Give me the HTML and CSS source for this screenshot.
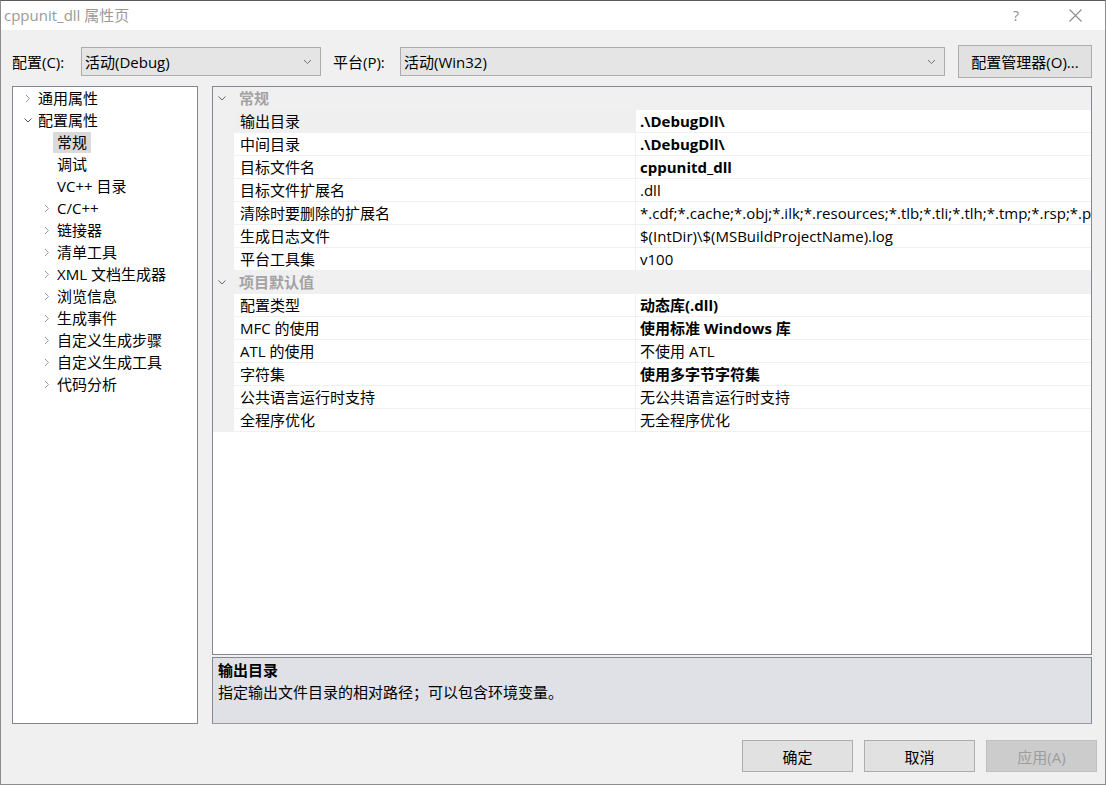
FILE: index.html
```html
<!DOCTYPE html>
<html lang="zh-CN">
<head>
<meta charset="utf-8">
<title>cppunit_dll 属性页</title>
<link rel="stylesheet" href="styles.css">
</head>
<body>
<div class="window">
  <div class="titlebar">
    <span class="title">cppunit_dll 属性页</span>
    <span class="tb-help">?</span>
    <span class="tb-close"><svg width="13" height="13" viewBox="0 0 13 13"><path d="M0.5 0.5 L12.5 12.5 M12.5 0.5 L0.5 12.5" stroke="#8c8c8c" stroke-width="1.1" fill="none"/></svg></span>
  </div>

  <div class="toolbar">
    <span class="lbl lbl1">配置(C):</span>
    <div class="combo combo1"><span>活动(Debug)</span><svg class="cchev" width="9" height="6" viewBox="0 0 9 6"><polyline points="1,1 4.5,4.5 8,1" fill="none" stroke="#707070" stroke-width="1"/></svg></div>
    <span class="lbl lbl2">平台(P):</span>
    <div class="combo combo2"><span>活动(Win32)</span><svg class="cchev" width="9" height="6" viewBox="0 0 9 6"><polyline points="1,1 4.5,4.5 8,1" fill="none" stroke="#707070" stroke-width="1"/></svg></div>
    <button class="btn mgr">配置管理器(O)...</button>
  </div>

  <div class="main">
    <div class="tree">
      <div class="ti l1"><svg class="chev" width="8" height="9" viewBox="0 0 8 9"><polyline points="2,1 5.5,4.5 2,8" fill="none" stroke="#9a9a9a" stroke-width="1"/></svg><span>通用属性</span></div>
      <div class="ti l1"><svg class="chev" width="8" height="9" viewBox="0 0 8 9"><polyline points="0.5,2.5 4,6 7.5,2.5" fill="none" stroke="#555" stroke-width="1"/></svg><span>配置属性</span></div>
      <div class="ti l2 noc"><span class="sel">常规</span></div>
      <div class="ti l2 noc"><span>调试</span></div>
      <div class="ti l2 noc"><span>VC++ 目录</span></div>
      <div class="ti l2"><svg class="chev" width="8" height="9" viewBox="0 0 8 9"><polyline points="2,1 5.5,4.5 2,8" fill="none" stroke="#9a9a9a" stroke-width="1"/></svg><span>C/C++</span></div>
      <div class="ti l2"><svg class="chev" width="8" height="9" viewBox="0 0 8 9"><polyline points="2,1 5.5,4.5 2,8" fill="none" stroke="#9a9a9a" stroke-width="1"/></svg><span>链接器</span></div>
      <div class="ti l2"><svg class="chev" width="8" height="9" viewBox="0 0 8 9"><polyline points="2,1 5.5,4.5 2,8" fill="none" stroke="#9a9a9a" stroke-width="1"/></svg><span>清单工具</span></div>
      <div class="ti l2"><svg class="chev" width="8" height="9" viewBox="0 0 8 9"><polyline points="2,1 5.5,4.5 2,8" fill="none" stroke="#9a9a9a" stroke-width="1"/></svg><span>XML 文档生成器</span></div>
      <div class="ti l2"><svg class="chev" width="8" height="9" viewBox="0 0 8 9"><polyline points="2,1 5.5,4.5 2,8" fill="none" stroke="#9a9a9a" stroke-width="1"/></svg><span>浏览信息</span></div>
      <div class="ti l2"><svg class="chev" width="8" height="9" viewBox="0 0 8 9"><polyline points="2,1 5.5,4.5 2,8" fill="none" stroke="#9a9a9a" stroke-width="1"/></svg><span>生成事件</span></div>
      <div class="ti l2"><svg class="chev" width="8" height="9" viewBox="0 0 8 9"><polyline points="2,1 5.5,4.5 2,8" fill="none" stroke="#9a9a9a" stroke-width="1"/></svg><span>自定义生成步骤</span></div>
      <div class="ti l2"><svg class="chev" width="8" height="9" viewBox="0 0 8 9"><polyline points="2,1 5.5,4.5 2,8" fill="none" stroke="#9a9a9a" stroke-width="1"/></svg><span>自定义生成工具</span></div>
      <div class="ti l2"><svg class="chev" width="8" height="9" viewBox="0 0 8 9"><polyline points="2,1 5.5,4.5 2,8" fill="none" stroke="#9a9a9a" stroke-width="1"/></svg><span>代码分析</span></div>
    </div>

    <div class="right">
      <div class="grid">
        <div class="cat"><span class="margin"><svg width="8" height="9" viewBox="0 0 8 9"><polyline points="0.5,2.5 4,6 7.5,2.5" fill="none" stroke="#666" stroke-width="1"/></svg></span><span class="cat-name">常规</span></div>
        <div class="row selrow"><span class="margin"></span><span class="name">输出目录</span><span class="val b">.\DebugDll\</span></div>
        <div class="row"><span class="margin"></span><span class="name">中间目录</span><span class="val b">.\DebugDll\</span></div>
        <div class="row"><span class="margin"></span><span class="name">目标文件名</span><span class="val b">cppunitd_dll</span></div>
        <div class="row"><span class="margin"></span><span class="name">目标文件扩展名</span><span class="val">.dll</span></div>
        <div class="row"><span class="margin"></span><span class="name">清除时要删除的扩展名</span><span class="val">*.cdf;*.cache;*.obj;*.ilk;*.resources;*.tlb;*.tli;*.tlh;*.tmp;*.rsp;*.pgc;*.pgd;*.meta;$(TargetPath)</span></div>
        <div class="row"><span class="margin"></span><span class="name">生成日志文件</span><span class="val">$(IntDir)\$(MSBuildProjectName).log</span></div>
        <div class="row"><span class="margin"></span><span class="name">平台工具集</span><span class="val">v100</span></div>
        <div class="cat"><span class="margin"><svg width="8" height="9" viewBox="0 0 8 9"><polyline points="0.5,2.5 4,6 7.5,2.5" fill="none" stroke="#666" stroke-width="1"/></svg></span><span class="cat-name">项目默认值</span></div>
        <div class="row"><span class="margin"></span><span class="name">配置类型</span><span class="val b">动态库(.dll)</span></div>
        <div class="row"><span class="margin"></span><span class="name">MFC 的使用</span><span class="val b">使用标准 Windows 库</span></div>
        <div class="row"><span class="margin"></span><span class="name">ATL 的使用</span><span class="val">不使用 ATL</span></div>
        <div class="row"><span class="margin"></span><span class="name">字符集</span><span class="val b">使用多字节字符集</span></div>
        <div class="row"><span class="margin"></span><span class="name">公共语言运行时支持</span><span class="val">无公共语言运行时支持</span></div>
        <div class="row"><span class="margin"></span><span class="name">全程序优化</span><span class="val">无全程序优化</span></div>
      </div>
      <div class="desc">
        <div class="desc-title">输出目录</div>
        <div class="desc-text">指定输出文件目录的相对路径；可以包含环境变量。</div>
      </div>
    </div>
  </div>

  <div class="footer">
    <button class="btn fbtn">确定</button>
    <button class="btn fbtn">取消</button>
    <button class="btn fbtn disabled">应用(A)</button>
  </div>
</div>
</body>
</html>
```

FILE: styles.css
```css
html, body {
  margin: 0;
  padding: 0;
  background: #f0f0f0;
}
body {
  font-family: "Open Sans", "Noto Sans CJK SC", sans-serif;
  font-size: 15px;
  color: #000;
}
.window {
  width: 1106px;
  height: 785px;
  box-sizing: border-box;
  border: 1px solid #8c8c8c;
  border-top-color: #5a5a5a;
  background: #f0f0f0;
  display: flex;
  flex-direction: column;
}
.titlebar {
  height: 29px;
  background: #fff;
  display: flex;
  align-items: center;
  flex: none;
}
.title {
  padding-left: 3px;
  color: #9a9a9a;
  font-size: 15px;
  line-height: 29px;
  flex: 1;
}
.tb-help {
  color: #8c8c8c;
  font-size: 14px;
  width: 12px;
  margin-right: 44px;
}
.tb-close {
  display: flex;
  margin-right: 23px;
}
.toolbar {
  margin-top: 15px;
  height: 33px;
  display: flex;
  align-items: center;
  padding-left: 11px;
  flex: none;
}
.lbl {
  line-height: 20px;
  white-space: nowrap;
}
.lbl1 { width: 69px; }
.lbl2 { width: 67px; margin-left: 12px; }
.combo {
  height: 29px;
  box-sizing: border-box;
  border: 1px solid #acacac;
  background: #e5e5e5;
  display: flex;
  align-items: center;
  padding-left: 3px;
  padding-right: 8px;
}
.combo span { flex: 1; }
.combo1 { width: 240px; }
.combo2 { width: 545px; }
.btn {
  font-family: inherit;
  font-size: 15px;
  color: #000;
  background: #e1e1e1;
  border: 1px solid #adadad;
  box-sizing: border-box;
  padding: 0;
  margin: 0;
}
.mgr {
  width: 134px;
  height: 33px;
  margin-left: 13px;
}
.main {
  margin-top: 8px;
  height: 638px;
  display: flex;
  padding-left: 11px;
  gap: 14px;
  flex: none;
}
.tree {
  width: 186px;
  box-sizing: border-box;
  border: 1px solid #828790;
  background: #fff;
}
.ti {
  height: 22px;
  display: flex;
  align-items: center;
  line-height: 22px;
  white-space: nowrap;
}
.ti .chev { flex: none; margin-right: 6px; }
.ti.l1 { padding-left: 11px; }
.ti.l2 { padding-left: 30px; }
.ti.noc { padding-left: 39px; }
.ti .sel {
  background: #dadada;
  padding: 0 4px;
  margin-left: 1px;
  line-height: 21px;
}
.ti.noc span:not(.sel) { padding-left: 5px; }
.right {
  width: 880px;
  display: flex;
  flex-direction: column;
  gap: 2px;
}
.grid {
  height: 569px;
  box-sizing: border-box;
  border: 1px solid #828790;
  background: #fff;
  overflow: hidden;
}
.cat, .row {
  display: flex;
  height: 23px;
  box-sizing: border-box;
  line-height: 22px;
  white-space: nowrap;
}
.cat {
  background: #f0f0f0;
}
.row {
  border-bottom: 1px solid #f0f0f0;
}
.margin {
  width: 21px;
  flex: none;
  background: #f0f0f0;
  display: flex;
  align-items: center;
  padding-left: 5px;
  box-sizing: border-box;
}
.cat-name {
  color: #a3a3a3;
  font-weight: bold;
  padding-left: 5px;
}
.name {
  width: 402px;
  flex: none;
  box-sizing: border-box;
  padding-left: 6px;
  border-right: 1px solid #f0f0f0;
}
.selrow .name { background: #efefef; }
.val {
  flex: 1;
  padding-left: 4px;
  overflow: hidden;
}
.b { font-weight: bold; }
.desc {
  height: 67px;
  box-sizing: border-box;
  border: 1px solid #828790;
  border-bottom-color: #9a9a9a;
  background: #dfe1e7;
  padding: 1px 5px 0;
}
.desc-title {
  font-weight: bold;
  line-height: 22px;
}
.desc-text {
  line-height: 22px;
}
.footer {
  margin-top: 16px;
  display: flex;
  justify-content: flex-end;
  gap: 11px;
  padding-right: 8px;
}
.fbtn {
  width: 111px;
  height: 32px;
}
.fbtn.disabled {
  background: #cccccc;
  border-color: #bfbfbf;
  color: #9d9d9d;
}
```
